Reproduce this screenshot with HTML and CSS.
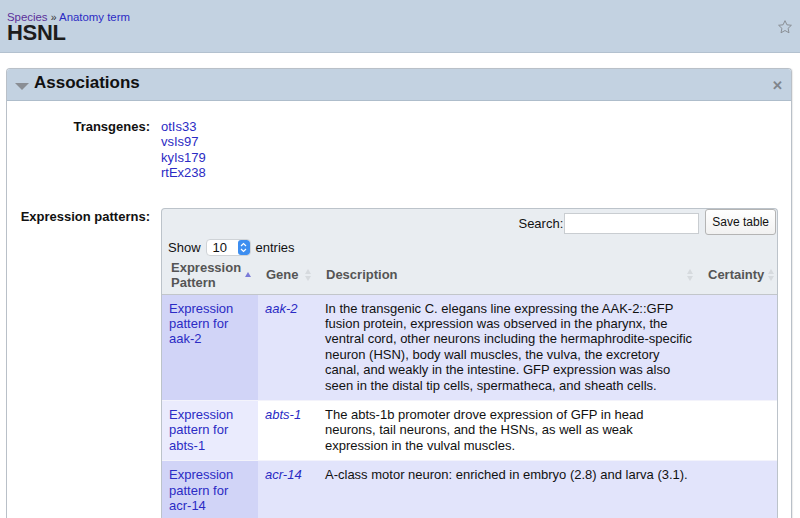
FILE: index.html
```html
<!DOCTYPE html>
<html>
<head>
<meta charset="utf-8">
<link rel="stylesheet" href="styles.css">
</head>
<body>
<div class="page-header">
  <div class="titles">
    <div class="crumbs"><a class="visited" href="#">Species</a> <span class="sep">»</span> <a href="#">Anatomy term</a></div>
    <h1>HSNL</h1>
  </div>
  <svg class="star" width="16" height="16" viewBox="0 0 24 24"><path d="M12 2.5l2.9 6.2 6.7.7-5 4.6 1.4 6.7L12 17.3l-6 3.4 1.4-6.7-5-4.6 6.7-.7z" fill="none" stroke="#8a8f95" stroke-width="1.5" stroke-linejoin="round"/></svg>
</div>

<div class="section">
  <div class="section-head">
    <span class="tri"></span>
    <h2>Associations</h2>
    <span class="close">✕</span>
  </div>
  <div class="section-body">
    <div class="field">
      <div class="label">Transgenes:</div>
      <div class="value links">
        <a href="#">otIs33</a>
        <a href="#">vsIs97</a>
        <a href="#">kyIs179</a>
        <a href="#">rtEx238</a>
      </div>
    </div>
    <div class="field field-expr">
      <div class="label">Expression patterns:</div>
      <div class="value">
        <div class="dt-wrap">
          <div class="dt-top">
            <label class="search">Search:<input type="text"></label>
            <button class="save">Save table</button>
          </div>
          <div class="dt-length">Show <span class="select"><span class="sel-val">10</span><span class="stepper"><svg width="7" height="11" viewBox="0 0 7 11"><path d="M1 4l2.5-2.5L6 4M1 7l2.5 2.5L6 7" fill="none" stroke="#fff" stroke-width="1.2"/></svg></span></span> entries</div>
          <table class="dt">
            <colgroup>
              <col class="c1"><col class="c2"><col class="c3"><col class="c4">
            </colgroup>
            <thead>
              <tr>
                <th><div class="th-in">Expression Pattern<span class="sort-up"></span></div></th>
                <th><div class="th-in">Gene<span class="sort-both"></span></div></th>
                <th><div class="th-in">Description<span class="sort-both"></span></div></th>
                <th><div class="th-in">Certainty<span class="sort-both"></span></div></th>
              </tr>
            </thead>
            <tbody>
              <tr class="odd">
                <td class="first"><a href="#">Expression pattern for aak-2</a></td>
                <td><a class="gene" href="#">aak-2</a></td>
                <td>In the transgenic C. elegans line expressing the AAK-2::GFP<br>fusion protein, expression was observed in the pharynx, the<br>ventral cord, other neurons including the hermaphrodite-specific<br>neuron (HSN), body wall muscles, the vulva, the excretory<br>canal, and weakly in the intestine. GFP expression was also<br>seen in the distal tip cells, spermatheca, and sheath cells.</td>
                <td></td>
              </tr>
              <tr class="even">
                <td class="first"><a href="#">Expression pattern for abts-1</a></td>
                <td><a class="gene" href="#">abts-1</a></td>
                <td>The abts-1b promoter drove expression of GFP in head<br>neurons, tail neurons, and the HSNs, as well as weak<br>expression in the vulval muscles.</td>
                <td></td>
              </tr>
              <tr class="odd">
                <td class="first"><a href="#">Expression pattern for acr-14</a></td>
                <td><a class="gene" href="#">acr-14</a></td>
                <td>A-class motor neuron: enriched in embryo (2.8) and larva (3.1).</td>
                <td></td>
              </tr>
            </tbody>
          </table>
        </div>
      </div>
    </div>
  </div>
</div>
</body>
</html>
```

FILE: styles.css
```css
html, body {
  margin: 0;
  padding: 0;
  background: #fff;
  font-family: "Liberation Sans", Arial, Helvetica, sans-serif;
  font-size: 13px;
  color: #111;
  overflow: hidden;
}
a {
  color: #2b2bc4;
  text-decoration: none;
}
a.visited {
  color: #5b2f9a;
}
.page-header {
  background: #c3d2e1;
  border-bottom: 1px solid #b3c1cf;
  height: 53px;
  box-sizing: border-box;
  padding: 11px 8px 0 7px;
  display: flex;
  justify-content: space-between;
}
.crumbs {
  font-size: 11.4px;
  line-height: 12px;
}
.crumbs .sep {
  color: #333;
  font-size: 10.5px;
}
h1 {
  margin: 2px 0 0 0;
  font-size: 22px;
  line-height: 16px;
  padding: 0;
  font-weight: bold;
  color: #1d1d1d;
  letter-spacing: -0.3px;
}
.star {
  margin-top: 8px;
  margin-right: -1px;
}
.section {
  margin: 15px 8px 0 6px;
  border: 1px solid #b9c0c8;
  border-bottom: none;
  border-radius: 4px 4px 0 0;
  box-shadow: 1px 0 1px rgba(0,0,0,0.08);
}
.section-head {
  height: 31px;
  background: #c3d2e1;
  border-bottom: 1px solid #aebdcb;
  border-radius: 3px 3px 0 0;
  display: flex;
  align-items: center;
  padding: 0 8px 0 8px;
}
.tri {
  width: 0;
  height: 0;
  border-left: 7px solid transparent;
  border-right: 7px solid transparent;
  border-top: 7px solid #8a8e94;
  margin-top: 4px;
  margin-right: 5px;
}
.section-head h2 {
  margin: 0;
  font-size: 17px;
  font-weight: bold;
  color: #111;
  flex: 1;
  line-height: 20px;
  margin-top: -3px;
}
.close {
  color: #7f858c;
  font-size: 13px;
  font-weight: bold;
  margin-top: 2px;
}
.section-body {
  padding: 18px 13px 0 0;
}
.field {
  display: grid;
  grid-template-columns: 143px 1fr;
  column-gap: 11px;
}
.label {
  text-align: right;
  font-weight: bold;
  line-height: 15.4px;
  color: #111;
}
.links {
  display: flex;
  flex-direction: column;
  line-height: 15.4px;
}
.field-expr {
  margin-top: 28px;
}
.dt-wrap {
  background: #e9edf1;
  border: 1px solid #bcc3ca;
  border-radius: 4px;
  border-bottom: none;
  margin-top: -1px;
}
.dt-top {
  display: flex;
  justify-content: flex-end;
  align-items: flex-start;
  gap: 6px;
  padding: 0 1px 0 0;
  height: 28px;
}
.search {
  display: flex;
  align-items: center;
  font-size: 13px;
  color: #111;
  margin-top: 4px;
}
.search input {
  width: 135px;
  height: 21px;
  box-sizing: border-box;
  border: 1px solid #c9cdd1;
  margin: 0 0 0 1px;
  padding: 0;
  background: #fff;
}
.save {
  font-family: inherit;
  font-size: 12px;
  color: #111;
  background: linear-gradient(#fff, #f1f1f1);
  border: 1px solid #b4b4b4;
  border-radius: 3px;
  height: 26px;
  padding: 0 6px;
  margin-top: 0;
}
.dt-length {
  display: flex;
  align-items: center;
  padding-left: 6px;
  font-size: 13px;
  height: 20px;
  margin-top: 1px;
}
.select {
  display: inline-flex;
  align-items: stretch;
  width: 45px;
  height: 17px;
  background: #fff;
  border: 1px solid #cfd3d7;
  border-radius: 4px;
  margin: 0 5px 0 5px;
  box-sizing: border-box;
  overflow: hidden;
}
.sel-val {
  flex: 1;
  padding-left: 6px;
  font-size: 13px;
  line-height: 15px;
}
.stepper {
  width: 12px;
  background: #3d8ef0;
  border-radius: 3px;
  display: flex;
  align-items: center;
  justify-content: center;
}
table.dt {
  width: 100%;
  border-collapse: collapse;
  table-layout: fixed;
}
col.c1 { width: 96px; }
col.c2 { width: 60px; }
col.c3 { width: 382px; }
col.c4 { width: auto; }
thead th {
  text-align: left;
  color: #555;
  font-weight: bold;
  font-size: 13px;
  line-height: 15px;
  padding: 2px 6px 4px 8px;
  border-bottom: 1px solid #c2c6ca;
  vertical-align: middle;
  height: 30px;
}
thead th:first-child {
  padding-left: 9px;
}
thead th:last-child {
  padding-right: 2px;
}
.th-in {
  position: relative;
  padding-right: 14px;
}
.sort-up, .sort-both {
  position: absolute;
  right: 0;
  top: 50%;
  width: 7px;
  height: 12px;
  margin-top: -6px;
}
.sort-up::before {
  content: "";
  position: absolute;
  left: 0;
  top: 3px;
  border-left: 3.5px solid transparent;
  border-right: 3.5px solid transparent;
  border-bottom: 5px solid #7a7ad8;
}
.sort-both::before, .sort-both::after {
  content: "";
  position: absolute;
  left: 0;
  border-left: 3.5px solid transparent;
  border-right: 3.5px solid transparent;
}
.sort-both::before {
  top: 0;
  border-bottom: 5px solid #d6dade;
}
.sort-both::after {
  top: 7px;
  border-top: 5px solid #d6dade;
}
tbody td {
  vertical-align: top;
  padding: 6px 2px 7px 7px;
  line-height: 15.4px;
  font-size: 13px;
  color: #111;
}
tbody td.first {
  padding-right: 8px;
}
.gene {
  font-style: italic;
}
tr.odd td {
  background: #e2e4fb;
}
tr.odd td.first {
  background: #d1d4f7;
}
tr.even td {
  background: #fff;
}
tr.even td.first {
  background: #eaebfd;
}
tr.odd + tr.even td, tr.even + tr.odd td {
  border-top: 1px solid #f3f3fb;
}
```
